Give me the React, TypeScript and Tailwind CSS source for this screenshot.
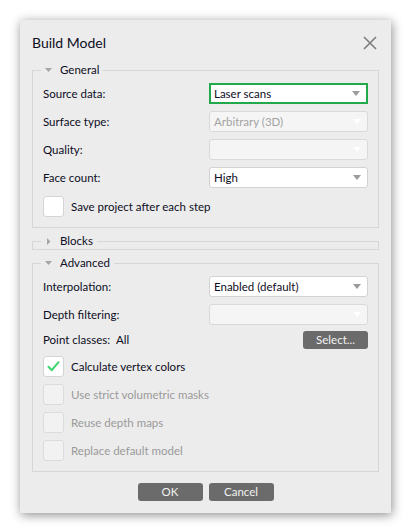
import React from "react";

const FONT = { fontFamily: 'Lato, "Open Sans", "Liberation Sans", sans-serif' };

function Arrow({ disabled }: { disabled?: boolean }) {
  return (
    <svg width="8" height="5" viewBox="0 0 8 5" className="shrink-0">
      <polygon points="0,0 8,0 4,5" fill={disabled ? "#ffffff" : "#9b9b9b"} />
    </svg>
  );
}

function Select({ value, disabled, focused }: { value?: string; disabled?: boolean; focused?: boolean }) {
  const base = "h-[21px] w-full flex items-center justify-between rounded-[3px] pr-[6px] ";
  const cls = focused
    ? base + "border-2 border-[#22a94b] bg-white pl-[3px] rounded-none"
    : disabled
    ? base + "border border-[#d9d9d9] bg-[#f5f5f5] pl-[4px]"
    : base + "border border-[#d2d2d2] bg-white pl-[4px]";
  return (
    <div className={cls}>
      <span className={"text-[11.5px] leading-[16px] " + (disabled ? "text-[#a3a3a3]" : "text-[#0d0d24]")}>{value ?? ""}</span>
      <Arrow disabled={disabled} />
    </div>
  );
}

function Checkbox({ label, checked, disabled }: { label: string; checked?: boolean; disabled?: boolean }) {
  return (
    <div className="flex items-center h-[21px]">
      <div
        className={
          "w-[21px] h-[21px] rounded-[3px] border flex items-center justify-center " +
          (disabled ? "bg-[#f2f2f2] border-[#dcdcdc]" : "bg-white border-[#d4d4d4]")
        }
      >
        {checked && (
          <svg width="13" height="11" viewBox="0 0 13 11">
            <path d="M1.5 5.8 L4.8 9.2 L11.5 1.2" fill="none" stroke="#3fd46c" strokeWidth="2" strokeLinecap="round" strokeLinejoin="round" />
          </svg>
        )}
      </div>
      <span className={"ml-[7px] text-[11.5px] leading-[16px] " + (disabled ? "text-[#9a9a9a]" : "text-[#0d0d24]")}>{label}</span>
    </div>
  );
}

function Row({ label, children, h = "h-[21px]" }: { label: React.ReactNode; children?: React.ReactNode; h?: string }) {
  return (
    <div className={"grid grid-cols-[166px_1fr] items-center " + h}>
      <div className="text-[11.5px] leading-[16px] text-[#0d0d24]">{label}</div>
      <div className="flex justify-end">{children}</div>
    </div>
  );
}

function Legend({ title, open }: { title: string; open: boolean }) {
  return (
    <legend className="px-[4px] h-[16px] flex items-center -ml-[2px]">
      {open ? (
        <svg width="7" height="4" viewBox="0 0 7 4" className="shrink-0">
          <polygon points="0,0 7,0 3.5,4" fill="#a5a5a5" />
        </svg>
      ) : (
        <svg width="7" height="7" viewBox="0 0 7 7" className="shrink-0">
          <polygon points="2,0 5.5,3.5 2,7" fill="#a5a5a5" />
        </svg>
      )}
      <span className="ml-[8px] text-[11.5px] leading-[16px] text-[#0d0d24]">{title}</span>
    </legend>
  );
}

export default function App() {
  return (
    <div className="w-[410px] h-[532px] bg-white pt-[20px] pl-[20px] overflow-hidden" style={FONT}>
      <div className="w-[371px] h-[493px] bg-[#ececec] shadow-[1px_2px_10px_rgba(0,0,0,0.45)] flex flex-col px-[12px]">
        <div className="mt-[14px] h-[18px] flex items-center justify-between">
          <span className="text-[14px] leading-[18px] text-[#0d0d24]">Build Model</span>
          <svg width="14" height="14" viewBox="0 0 14 14" className="mr-[2px]">
            <path d="M1 1 L13 13 M13 1 L1 13" stroke="#7d7d7d" strokeWidth="1.6" />
          </svg>
        </div>

        <fieldset className="mt-[10px] border border-[#d6d6d6] px-[10px] pt-[5px] pb-[10px] flex flex-col gap-[7px]">
          <Legend title="General" open />
          <Row label="Source data:"><Select value="Laser scans" focused /></Row>
          <Row label="Surface type:"><Select value="Arbitrary (3D)" disabled /></Row>
          <Row label="Quality:"><Select disabled /></Row>
          <Row label="Face count:"><Select value="High" /></Row>
          <div className="mt-[1px]"><Checkbox label="Save project after each step" /></div>
        </fieldset>

        <fieldset className="mt-[5px] border border-[#d6d6d6] px-[10px]">
          <Legend title="Blocks" open={false} />
        </fieldset>

        <fieldset className="mt-[5px] border border-[#d6d6d6] px-[10px] pt-[5px] pb-[10px] flex flex-col">
          <Legend title="Advanced" open />
          <Row label="Interpolation:"><Select value="Enabled (default)" /></Row>
          <div className="mt-[7px]"><Row label="Depth filtering:"><Select disabled /></Row></div>
          <div className="mt-[6px] h-[18px] flex items-center justify-between">
            <div className="flex items-center text-[11.5px] leading-[16px] text-[#0d0d24]">
              <span>Point classes:</span>
              <span className="ml-[6px]">All</span>
            </div>
            <button className="w-[65px] h-[18px] rounded-[3px] bg-[#6b6b6b] text-[11.5px] leading-[16px] text-[#f2f2f2]">Select...</button>
          </div>
          <div className="mt-[7px] flex flex-col gap-[7px]">
            <Checkbox label="Calculate vertex colors" checked />
            <Checkbox label="Use strict volumetric masks" disabled />
            <Checkbox label="Reuse depth maps" disabled />
            <Checkbox label="Replace default model" disabled />
          </div>
        </fieldset>

        <div className="mt-[11px] flex justify-center gap-[6px]">
          <button className="w-[65px] h-[18px] rounded-[3px] bg-[#6b6b6b] text-[11.5px] leading-[16px] text-[#f2f2f2]">OK</button>
          <button className="w-[65px] h-[18px] rounded-[3px] bg-[#6b6b6b] text-[11.5px] leading-[16px] text-[#f2f2f2]">Cancel</button>
        </div>
      </div>
    </div>
  );
}
